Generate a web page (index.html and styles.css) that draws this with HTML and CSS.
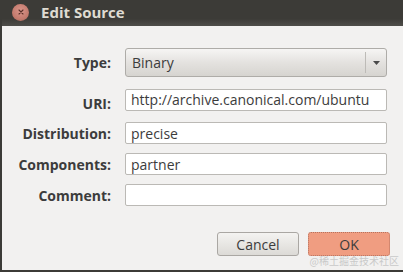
FILE: index.html
```html
<!DOCTYPE html>
<html lang="en">
<head>
    <meta charset="UTF-8">
    <title>Edit Source</title>
    <link rel="stylesheet" href="styles.css">
</head>
<body>
    <div class="window">
        <div class="titlebar">
            <span class="close-btn">
                <svg width="16" height="16" viewBox="0 0 16 16">
                    <path d="M6 6 L10 10 M10 6 L6 10" stroke="#5a2f28" stroke-width="1.1" stroke-linecap="round"/>
                </svg>
            </span>
            <span class="title">Edit Source</span>
        </div>

        <div class="content">
            <form class="source-form">
                <label class="field-label type-label">Type:</label>
                <div class="combo">
                    <span class="combo-text">Binary</span>
                    <span class="combo-arrow">
                        <svg width="7" height="4" viewBox="0 0 7 4"><path d="M0 0 L7 0 L3.5 4 Z" fill="#4a4a4a"/></svg>
                    </span>
                </div>

                <label class="field-label first-entry">URI:</label>
                <input class="entry first-entry" type="text" value="http://archive.canonical.com/ubuntu">

                <label class="field-label">Distribution:</label>
                <input class="entry" type="text" value="precise">

                <label class="field-label">Components:</label>
                <input class="entry" type="text" value="partner">

                <label class="field-label">Comment:</label>
                <input class="entry" type="text" value="">
            </form>

            <div class="buttons">
                <button type="button" class="btn btn-cancel">Cancel</button>
                <button type="button" class="btn btn-ok">OK</button>
            </div>
        </div>

        <div class="watermark">@稀土掘金技术社区</div>
    </div>
</body>
</html>
```

FILE: styles.css
```css
body {
    margin: 0;
    padding: 0;
    background: #f2f1f0;
    font-family: "Open Sans", "Noto Sans", sans-serif;
}

.window {
    position: relative;
    width: 403px;
    height: 272px;
    box-sizing: border-box;
    border-left: 2px solid #3c3b37;
    border-bottom: 2px solid #3c3b37;
    background: #f2f1f0;
    overflow: hidden;
}

.titlebar {
    height: 26px;
    background: linear-gradient(to bottom, #3c3b37 0%, #3c3b37 72%, #4e4d49 100%);
    display: flex;
    align-items: center;
    padding-left: 10px;
    box-sizing: border-box;
}

.close-btn {
    width: 17px;
    height: 17px;
    border-radius: 50%;
    background: radial-gradient(circle at 50% 40%, #d9958a 0%, #c47b6e 60%, #9e6256 100%);
    display: flex;
    align-items: center;
    justify-content: center;
    margin-top: -2px;
}

.title {
    margin-left: 12px;
    margin-top: -2px;
    color: #dfdbd2;
    font-weight: bold;
    font-size: 15px;
}

.content {
    padding-top: 22px;
}

.source-form {
    display: grid;
    grid-template-columns: 109px 262px;
    column-gap: 14px;
    row-gap: 9px;
    align-items: center;
    margin: 0;
}

.field-label {
    text-align: right;
    font-weight: bold;
    font-size: 14px;
    color: #3c3c3c;
}

.first-entry {
    margin-top: 8px;
}

.combo {
    height: 29px;
    box-sizing: border-box;
    border: 1px solid #aeaca8;
    border-radius: 3px;
    background: linear-gradient(to bottom, #f6f5f4 0%, #e4e2df 50%, #d6d4d0 100%);
    display: flex;
    align-items: center;
}

.combo-text {
    flex: 1;
    padding-left: 6px;
    font-size: 14px;
    color: #3c3c3c;
}

.combo-arrow {
    width: 20px;
    height: 21px;
    border-left: 1px solid #bdbbb7;
    display: flex;
    align-items: center;
    justify-content: center;
}

.entry {
    height: 22px;
    box-sizing: border-box;
    border: 1px solid #bbb9b5;
    border-radius: 2px;
    background: #ffffff;
    padding: 0 5px;
    font-family: "Open Sans", "Noto Sans", sans-serif;
    font-size: 14px;
    color: #3c3c3c;
    margin: 0;
}

.buttons {
    display: flex;
    justify-content: flex-end;
    gap: 9px;
    padding-right: 13px;
    margin-top: 26px;
}

.btn {
    width: 82px;
    height: 24px;
    border-radius: 3px;
    font-family: "Open Sans", "Noto Sans", sans-serif;
    font-size: 14px;
    color: #3c3c3c;
    padding: 0;
    cursor: pointer;
}

.btn-cancel {
    border: 1px solid #aaa7a3;
    background: linear-gradient(to bottom, #f4f3f1 0%, #dcdad6 100%);
}

.btn-ok {
    border: 1px dotted #b5735f;
    background: #f09d81;
    outline: none;
}

.watermark {
    position: absolute;
    right: 4px;
    bottom: 2px;
    font-family: "Noto Sans CJK SC", sans-serif;
    font-size: 10px;
    color: #c9c9c9;
}
```
